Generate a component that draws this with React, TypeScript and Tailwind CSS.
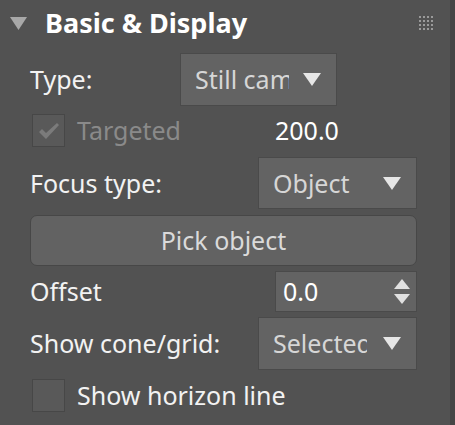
import type {FunctionComponent, ReactNode} from 'react';

const font = {fontFamily: '"Noto Sans", "Open Sans", sans-serif'};

const Arrow: FunctionComponent = () => (
    <svg width="18" height="13" viewBox="0 0 18 13" className="shrink-0">
        <path d="M0 0 H18 L9 13 Z" fill="#e6e6e6" />
    </svg>
);

const Dropdown: FunctionComponent<{value: string; className: string; textWidth: string}> = ({value, className, textWidth}) => (
    <div className={`flex items-center bg-[#636363] border border-[#4a4a4a] pl-[14px] pr-[15px] ${className}`}>
        <span className={`overflow-hidden whitespace-nowrap leading-[1.4] text-[#d6d6d6] ${textWidth}`}>{value}</span>
        <div className="ml-auto">
            <Arrow />
        </div>
    </div>
);

const Checkbox: FunctionComponent<{checked?: boolean}> = ({checked}) => (
    <div className="w-[33px] h-[33px] bg-[#595959] border border-[#474747] flex items-center justify-center">
        {checked && (
            <svg width="22" height="18" viewBox="0 0 22 18">
                <path d="M1 10 L4 7 L8 11 L19 1 L21 3 L8 17 Z" fill="#7b7b7b" />
            </svg>
        )}
    </div>
);

const Row: FunctionComponent<{children: ReactNode; className?: string}> = ({children, className}) => (
    <div className={`flex items-center ${className ?? ''}`}>{children}</div>
);

export default function App() {
    return (
        <div className="flex w-[455px] h-[425px] bg-[#525252] text-[25px] leading-none text-[#f2f2f2]" style={font}>
            <div className="flex-1 flex flex-col">
                {/* header */}
                <div className="flex items-center h-[45px] pl-[10px] pr-[17px]">
                    <svg width="17" height="13" viewBox="0 0 17 13" className="mt-[1px]">
                        <path d="M0 0 H17 L8.5 13 Z" fill="#a8a8a8" />
                    </svg>
                    <span className="ml-[18px] font-bold text-[27px] text-white">Basic &amp; Display</span>
                    <div className="ml-auto grid grid-cols-4 gap-[2px] mt-[1px]">
                        {Array.from({length: 16}).map((_, i) => (
                            <div key={i} className="w-[2px] h-[2px] bg-[#9a9a9a]" />
                        ))}
                    </div>
                </div>

                <div className="flex flex-col pl-[30px] pr-[33px]">
                    <Row className="mt-[8px]">
                        <span className="w-[150px]">Type:</span>
                        <Dropdown value="Still camera" className="w-[157px] h-[53px]" textWidth="w-[94px]" />
                    </Row>

                    <Row className="mt-[8px] h-[33px]">
                        <div className="ml-[2px]">
                            <Checkbox checked />
                        </div>
                        <span className="ml-[12px] text-[#8a8a8a]">Targeted</span>
                        <span className="ml-auto w-[142px] text-white">200.0</span>
                    </Row>

                    <Row className="mt-[10px] justify-between">
                        <span>Focus type:</span>
                        <Dropdown value="Object" className="w-[159px] h-[52px]" textWidth="w-[96px]" />
                    </Row>

                    <button className="mt-[6px] h-[51px] w-full rounded-[7px] bg-[#626262] border border-[#474747] text-[#dadada] text-[25px]">
                        Pick object
                    </button>

                    <Row className="mt-[5px] justify-between">
                        <span>Offset</span>
                        <div className="flex items-center w-[142px] h-[41px] bg-[#636363] border border-[#4a4a4a] pl-[7px] pr-[6px]">
                            <span className="text-white">0.0</span>
                            <svg width="16" height="25" viewBox="0 0 16 25" className="ml-auto">
                                <path d="M0 10 H16 L8 0 Z" fill="#e0e0e0" />
                                <path d="M0 15 H16 L8 25 Z" fill="#e0e0e0" />
                            </svg>
                        </div>
                    </Row>

                    <Row className="mt-[5px] justify-between">
                        <span>Show cone/grid:</span>
                        <Dropdown value="Selected" className="w-[159px] h-[53px]" textWidth="w-[94px]" />
                    </Row>

                    <Row className="mt-[9px] h-[33px]">
                        <div className="ml-[2px]">
                            <Checkbox />
                        </div>
                        <span className="ml-[12px]">Show horizon line</span>
                    </Row>
                </div>
            </div>
            <div className="w-[5px] bg-[#454545]" />
        </div>
    );
}
